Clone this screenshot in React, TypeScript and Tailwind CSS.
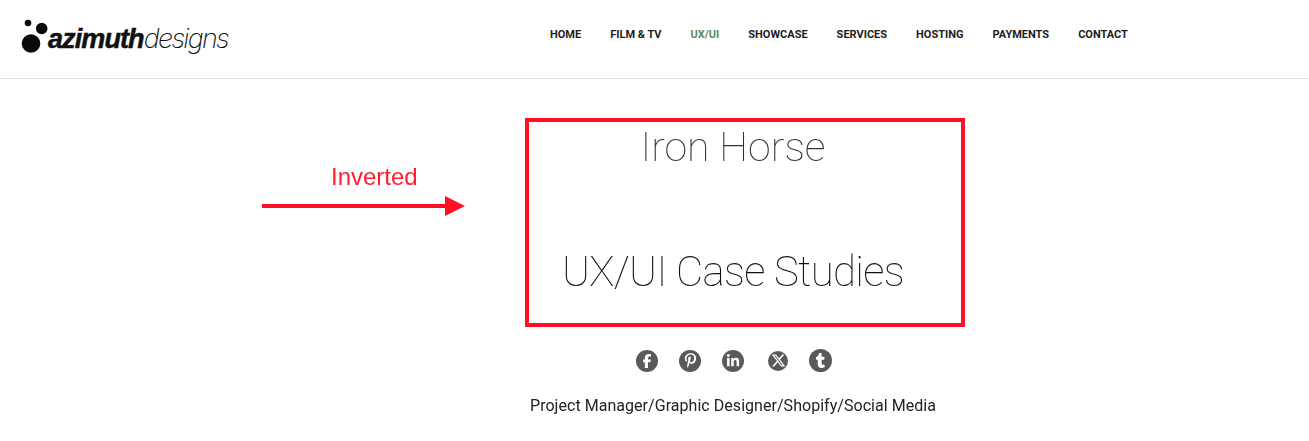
import { FaFacebookF, FaLinkedinIn, FaPinterestP, FaTumblr, FaXTwitter } from 'react-icons/fa6'

const navItems = ['HOME', 'FILM & TV', 'UX/UI', 'SHOWCASE', 'SERVICES', 'HOSTING', 'PAYMENTS', 'CONTACT']

function Logo() {
  return (
    <div className="relative flex h-[40px] w-[210px] items-end">
      {/* three dots of the logo mark */}
      <svg width="30" height="40" viewBox="0 0 30 40" className="absolute left-[21px] top-0">
        <circle cx="7" cy="8" r="3.3" fill="#0a0a0a" />
        <circle cx="20.7" cy="13.5" r="5.8" fill="#0a0a0a" />
        <circle cx="10" cy="28.5" r="9.3" fill="#0a0a0a" />
      </svg>
      <span className="absolute left-[48px] top-[9px] font-['Liberation_Sans',sans-serif] text-[27px] leading-[30px] tracking-[-0.9px] text-[#111] italic whitespace-nowrap">
        <span className="font-bold [-webkit-text-stroke:0.5px_#111]">azimuth</span>
        <span className="font-['Inter',sans-serif] font-extralight tracking-[-1.7px]">designs</span>
      </span>
    </div>
  )
}

function Social({ children, size = 'w-[22px] h-[22px]' }: { children: React.ReactNode; size?: string }) {
  return (
    <div className={`flex items-center justify-center rounded-full bg-[#5a5a5a] text-white ${size}`}>
      {children}
    </div>
  )
}

export default function App() {
  return (
    <div className="relative h-[441px] w-[1309px] overflow-hidden bg-white font-['Roboto',sans-serif] antialiased">
      <header className="flex h-[79px] items-center border-b border-[#e4e4e4] pb-[8px]">
        <Logo />
        <nav className="ml-[340px] flex items-center gap-[29px]">
          {navItems.map(item => (
            <a
              key={item}
              className={`text-[11px] font-bold whitespace-nowrap ${item === 'UX/UI' ? 'text-[#5c8a5c]' : 'text-[#1c1c1c]'}`}
            >
              {item}
            </a>
          ))}
        </nav>
      </header>

      <main className="ml-[383px] flex w-[700px] flex-col items-center will-change-transform">
        <h1 className="mt-[39px] text-[41px] leading-[58px] font-thin text-[#333]">Iron Horse</h1>
        <h2 className="mt-[64px] text-[42px] leading-[64px] font-thin tracking-[-0.7px] text-[#111]">UX/UI Case Studies</h2>
        <div className="mt-[45px] ml-[2px] flex items-center gap-[21px]">
          <Social><FaFacebookF size={14} /></Social>
          <Social><FaPinterestP size={15} /></Social>
          <Social><FaLinkedinIn size={14} /></Social>
          <Social size="ml-[3px] w-[20px] h-[20px]"><FaXTwitter size={15} /></Social>
          <Social size="w-[23px] h-[23px]"><FaTumblr size={15} /></Social>
        </div>
        <p className="mt-[22px] text-[16px] leading-[24px] tracking-[0.04px] text-[#222]">Project Manager/Graphic Designer/Shopify/Social Media</p>
      </main>

      {/* red annotation drawn over the page */}
      <div className="absolute left-[525px] top-[118px] h-[209px] w-[440px] border-[4px] border-[#ff1024]" />
      <span className="absolute left-[331px] top-[162px] font-['Liberation_Sans',sans-serif] text-[24px] leading-[30px] text-[#ff1f30]">Inverted</span>
      <svg width="206" height="22" viewBox="0 0 206 22" className="absolute left-[260px] top-[195px]">
        <rect x="2" y="9" width="186" height="4" fill="#ff1024" />
        <polygon points="185,1 205,11 185,21" fill="#ff1024" />
      </svg>
    </div>
  )
}
